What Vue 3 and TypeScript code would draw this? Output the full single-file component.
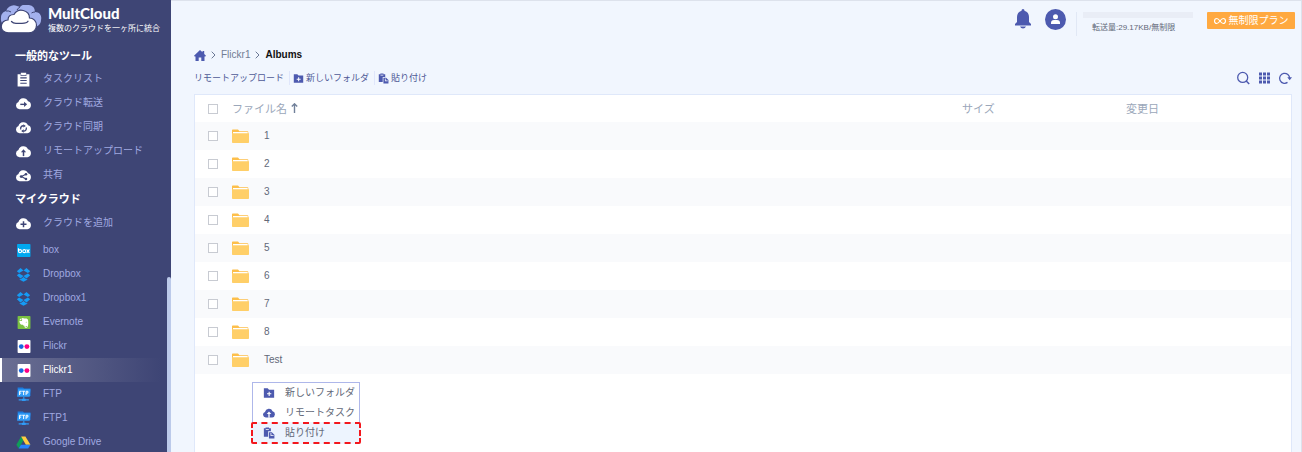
<script setup lang="ts">
import { ref } from 'vue'

interface NavItem {
  label: string
  icon: string
}

const tools: NavItem[] = [
  { label: 'タスクリスト', icon: 'tasks' },
  { label: 'クラウド転送', icon: 'cloud-transfer' },
  { label: 'クラウド同期', icon: 'cloud-sync' },
  { label: 'リモートアップロード', icon: 'cloud-upload' },
  { label: '共有', icon: 'cloud-share' },
]

const clouds: NavItem[] = [
  { label: 'box', icon: 'box' },
  { label: 'Dropbox', icon: 'dropbox' },
  { label: 'Dropbox1', icon: 'dropbox' },
  { label: 'Evernote', icon: 'evernote' },
  { label: 'Flickr', icon: 'flickr' },
  { label: 'Flickr1', icon: 'flickr' },
  { label: 'FTP', icon: 'ftp' },
  { label: 'FTP1', icon: 'ftp' },
  { label: 'Google Drive', icon: 'drive' },
]

const menuItems: NavItem[] = [
  { label: '新しいフォルダ', icon: 'folder-plus' },
  { label: 'リモートタスク', icon: 'cloud-up-blue' },
  { label: '貼り付け', icon: 'paste' },
]

const activeCloud = ref('Flickr1')
const folders = ['1', '2', '3', '4', '5', '6', '7', '8', 'Test']
const selected = ref<string[]>([])
</script>

<template>
  <div class="app">
    <svg class="sprite" aria-hidden="true">
      <symbol id="tasks" viewBox="0 0 14 14">
        <path fill="#fff" d="M1.500 2H4.500V.8h5V2h3v11.500h-11z" />
        <path stroke="#3e4575" d="M4 5.500h6M4 8h6M4 10.500h6" />
        <path stroke="#3e4575" stroke-width=".7" d="M4.500 2.300v1h5v-1" fill="none" />
      </symbol>
      <symbol id="cloud" viewBox="0 0 14 14">
        <path d="M3.300 12.300A3.400 3.400 0 0 1 2.300 5.700 4.700 4.700 0 0 1 11.200 4.900 3.800 3.800 0 0 1 10.700 12.300z" />
      </symbol>
      <symbol id="cloud-transfer" viewBox="0 0 14 14">
        <use href="#cloud" fill="#fff" />
        <path stroke="#3e4575" stroke-width="1.300" d="M4 7.800h4.500" />
        <path fill="#3e4575" d="M7.500 5.300 10.400 7.800 7.500 10.300z" />
      </symbol>
      <symbol id="cloud-sync" viewBox="0 0 14 14">
        <use href="#cloud" fill="#fff" />
        <path stroke="#3e4575" stroke-width="1.200" fill="none" d="M4.500 8.800A2.500 2.500 0 0 1 7.200 5.400M9.500 7A2.500 2.500 0 0 1 6.800 10.400" />
        <path fill="#3e4575" d="M6.800 3.900 9.200 5.500 6.800 7.100zM7.200 8.700v3.200L4.800 10.300z" />
      </symbol>
      <symbol id="cloud-upload" viewBox="0 0 14 14">
        <use href="#cloud" fill="#fff" />
        <path stroke="#3e4575" stroke-width="1.400" d="M7 7v4.300" />
        <path fill="#3e4575" d="M4.600 7.800 7 5l2.400 2.800z" />
      </symbol>
      <symbol id="cloud-share" viewBox="0 0 14 14">
        <use href="#cloud" fill="#fff" />
        <path stroke="#3e4575" fill="none" d="M9.300 5.800 5 8l4.300 2.200" />
        <g fill="#3e4575"><circle cx="9.300" cy="5.800" r="1.200" /><circle cx="4.800" cy="8" r="1.300" /><circle cx="9.300" cy="10.200" r="1.200" /></g>
      </symbol>
      <symbol id="cloud-add" viewBox="0 0 14 14">
        <use href="#cloud" fill="#fff" />
        <path stroke="#3e4575" stroke-width="1.400" d="M4.200 7.800h5.600M7 5v5.600" />
      </symbol>
      <symbol id="cloud-up-blue" viewBox="0 0 14 14">
        <use href="#cloud" fill="#4d5aaf" />
        <path stroke="#fff" stroke-width="1.500" d="M7 7.500v5" />
        <path fill="#fff" d="M4.300 8.300 7 5.300l2.700 3z" />
      </symbol>
      <symbol id="box" viewBox="0 0 14 14">
        <rect x="1" y="1" width="12.500" height="12" rx=".7" fill="#00a8f0" />
        <g stroke="#fff" stroke-width="1" fill="none">
          <path d="M2.300 4.800v3M9.900 6l2.600 3.200M12.500 6 9.900 9.200" />
          <circle cx="3.800" cy="7.600" r="1.400" /><circle cx="7.700" cy="7.600" r="1.400" />
        </g>
      </symbol>
      <symbol id="dropbox" viewBox="0 0 14 14">
        <path fill="#159bf5" d="M4.200 1 7 3.300 2.900 5.700.8 3.900zM9.800 1 7 3.300l4.100 2.400 2.100-1.800zM.8 7.700 2.900 6 7 8.500 4.200 10.800zM13.200 7.700 11.100 6 7 8.500l2.800 2.300zM3.500 11l.8.400L7 9.300l2.700 2.100.8-.4v.8L7 13.700l-3.500-1.900z" />
      </symbol>
      <symbol id="evernote" viewBox="0 0 14 14">
        <rect x="1.500" y="1" width="12" height="12" rx=".7" fill="#7ac142" />
        <path fill="#fff" d="M5.700 2.700c1 0 1.400.5 2.700.5 2.300 0 2.600.3 2.900 2 .4 2.500.2 6.500-1.300 6.700-1.800.2-2.200-.4-2.100-1.900-.6.200-1.300 0-1.400-.8-1.800 0-3-.6-3.400-3.600h2.100q.5 0 .5-.6z" />
        <path fill="#fff" d="M5 2.900v2H3z" />
        <path fill="#7ac142" d="M8.800 6.700q1-1 1.500.3zM9 10.200h1.300v.7H9z" />
      </symbol>
      <symbol id="flickr" viewBox="0 0 14 14">
        <rect x="1.500" y="1" width="12" height="12" rx=".7" fill="#fff" />
        <circle cx="4.900" cy="7.100" r="2.200" fill="#1769e0" /><circle cx="10.200" cy="7.100" r="2.300" fill="#ff0084" />
      </symbol>
      <symbol id="ftp" viewBox="0 0 14 14">
        <path fill="#1c7ce0" d="M1.500 .5h5l1 1h6v7h-12z" />
        <path fill="#319cf7" d="M2 2h11.500L12.800 9H1z" />
        <path stroke="#fff" fill="none" stroke-width=".9" d="M3.300 7.500v-3.500h2M3.300 5.700h1.500M5.800 4h2.600M7.100 4v3.500M9.400 7.500V4h1.700v1.700H9.400" />
        <path stroke="#319cf7" d="M7.300 9v2.500M2.500 12h9.500" /><rect x="5.500" y="11" width="3.500" height="2" fill="#319cf7" />
      </symbol>
      <symbol id="drive" viewBox="0 0 14 14">
        <path fill="#0f9d58" d="M4.800 1.300 7 5 2.500 12.700.3 9z" />
        <path fill="#ffcd40" d="M4.800 1.300h4L13.500 9H9.200z" />
        <path fill="#2684fc" d="M4.600 9h8.900l-2.200 3.700H2.500z" />
      </symbol>
      <symbol id="folder-plus" viewBox="0 0 14 14">
        <path fill="#4d5aaf" d="M1 1.500h4.500L7 3.300h6v9.200H1z" />
        <path stroke="#fff" stroke-width="1.300" d="M4.700 7.900h5M7.200 5.400v5" />
      </symbol>
      <symbol id="paste" viewBox="0 0 14 14">
        <path fill="#4d5aaf" d="M1 1.500h2V.5h4v1h2.200V5H6v6.500H1zM6.900 6h3.400L13.300 9v4.500H6.900z" />
        <path fill="#fff" d="M3.200 2.300h3.600v.9H3.200zM9.700 7v2.700h2.700v.9H8.800V7z" />
      </symbol>
    </svg>

    <aside class="sidebar">
      <div class="brand">
        <svg class="logo" viewBox="0 0 42 29" aria-hidden="true">
          <path fill="#a3b1ee" d="M6 21a7 7 0 0 1-5-8C1 9 3 7 6 6c2-5 7-7 11-5q2 .5 3 1 4-4 9-2 6 1 6 7c5 0 7 4 6 8 0 4-3 7-7 7z" />
          <path fill="none" stroke="#3e4575" stroke-width="1" d="M6 6q3-.5 5 1M20 2q-2 1-3 3M35 7q-2 0-3.500 1" />
          <path fill="#fff" stroke="#3e4575" stroke-width="1.200" d="M8.500 27.800C4 27.800 1.300 25 1.300 21.500c0-4 3-6.500 6.700-6.500 0-3.500 2.500-5.500 6-5.500 2-3.300 5.500-5 9.300-4 4 1 6.200 4 6.200 7.500 4 0 7 3.300 7 7.300 0 4.300-3 7.500-7.500 7.500z" />
          <path fill="none" stroke="#3e4575" stroke-width="1.300" stroke-linecap="round" d="M11.500 16.500q1.500 1.800 4.500 1.800h6q5 0 6-2" />
        </svg>
        <div>
          <div class="brand-name">MultCloud</div>
          <div class="tagline">複数のクラウドを一ヶ所に統合</div>
        </div>
      </div>

      <h2>一般的なツール</h2>
      <nav>
        <a v-for="item in tools" :key="item.label" href="#">
          <svg class="nav-icon" aria-hidden="true"><use :href="'#' + item.icon" /></svg>{{ item.label }}
        </a>
      </nav>
      <h2>マイクラウド</h2>
      <nav>
        <a href="#"><svg class="nav-icon" aria-hidden="true"><use href="#cloud-add" /></svg>クラウドを追加</a>
      </nav>
      <nav class="clouds">
        <a
          v-for="item in clouds"
          :key="item.label"
          href="#"
          :class="{ active: item.label === activeCloud }"
          @click.prevent="activeCloud = item.label"
        >
          <svg class="nav-icon" aria-hidden="true"><use :href="'#' + item.icon" /></svg>{{ item.label }}
        </a>
      </nav>
      <div class="scroll-thumb"></div>
    </aside>

    <main>
      <header>
        <button class="bell" aria-label="通知">
          <svg viewBox="0 0 16 20"><path fill="#4d5aaf" d="M8 0q1.500 0 1.500 1.700C12.500 2.500 14 5 14 8v5l2 2v1.500H0V15l2-2V8c0-3 1.500-5.500 4.500-6.300Q6.500 0 8 0zM5 17.500h6q-.8 2-3 2t-3-2z" /></svg>
        </button>
        <button class="avatar" aria-label="アカウント">
          <svg viewBox="0 0 21 21"><circle cx="10.500" cy="10.500" r="10.500" fill="#4d5aaf" /><circle cx="10.500" cy="7.800" r="2.500" fill="#fff" /><path fill="#fff" d="M6 15v-1q0-3 3-3h3q3 0 3 3v1z" /></svg>
        </button>
        <div class="traffic">
          <div class="meter"></div>
          <div class="traffic-text">転送量:29.17KB/無制限</div>
        </div>
        <button class="plan">
          <svg viewBox="0 0 12 8" aria-hidden="true"><path fill="none" stroke="#fff" stroke-width="1.200" d="M6 4C4.500 2 3.800 1.500 2.800 1.500a2.300 2.500 0 0 0 0 5C3.800 6.500 4.500 6 6 4s2.200-2.500 3.200-2.500a2.300 2.500 0 0 1 0 5C8.200 6.500 7.500 6 6 4z" /></svg>
          無制限プラン
        </button>
      </header>

      <div class="breadcrumb">
        <a href="#" aria-label="ホーム"><svg class="home" viewBox="0 0 12 11"><path fill="#4d5aaf" d="M6 0 8.500 2.300V1h1.700v3L12 5.800 11.300 6.500H10.500V11H7.300V7.500H4.700V11H1.500V6.500H.7L0 5.800z" /></svg></a>
        <svg class="chevron" viewBox="0 0 5 8"><path d="M.7.700 4 4 .7 7.300" /></svg>
        <a href="#">Flickr1</a>
        <svg class="chevron" viewBox="0 0 5 8"><path d="M.7.700 4 4 .7 7.300" /></svg>
        <strong>Albums</strong>
      </div>

      <div class="toolbar">
        <button>リモートアップロード</button>
        <button><svg class="tool-icon" aria-hidden="true"><use href="#folder-plus" /></svg>新しいフォルダ</button>
        <button><svg class="tool-icon" aria-hidden="true"><use href="#paste" /></svg>貼り付け</button>
        <div class="view-tools">
          <button aria-label="検索"><svg viewBox="0 0 14 14"><circle cx="6.700" cy="6.400" r="5" fill="none" stroke="#4d5aaf" stroke-width="1.300" /><path stroke="#4d5aaf" stroke-width="1.500" d="m10.200 10 3 3" /></svg></button>
          <button aria-label="グリッド表示"><svg viewBox="0 0 14 14"><path stroke="#4d5aaf" stroke-width="3" stroke-dasharray="3 1" d="M2 3h11M2 7h11M2 11h11" /></svg></button>
          <button aria-label="更新"><svg viewBox="0 0 14 14"><path fill="none" stroke="#4d5aaf" stroke-width="1.300" d="M9.500 11.400A5 5 0 1 1 11.600 7.500" /><path fill="#4d5aaf" d="M9.300 6.300h4.700l-2.300 3z" /></svg></button>
        </div>
      </div>

      <section class="panel">
        <table>
          <thead>
            <tr>
              <th class="check"><input type="checkbox" aria-label="すべて選択" /></th>
              <th>
                <span class="name-head">ファイル名<svg viewBox="0 0 7 11" aria-hidden="true"><path fill="none" stroke="#71809a" stroke-width="1.400" d="M3.500 10V1M.8 3.500 3.500.8l2.700 2.700" /></svg></span>
              </th>
              <th class="size">サイズ</th>
              <th class="date">変更日</th>
            </tr>
          </thead>
          <tbody>
            <tr v-for="folder in folders" :key="folder">
              <td class="check"><input v-model="selected" type="checkbox" :value="folder" :aria-label="folder" /></td>
              <td>
                <span class="name">
                  <svg viewBox="0 0 17 15" aria-hidden="true"><path fill="#fdbf4b" d="M0 1.200Q0 .5.700.5H6l1.500 1.700h8q.8 0 .8.700V8H0z" /><path fill="#fff" d="M1 3h14.700V6H1z" /><path fill="#ffcf68" d="M0 4.300h17V13.200q0 .8-.8.800H.8Q0 14 0 13.200z" /></svg>
                  {{ folder }}
                </span>
              </td>
              <td></td>
              <td></td>
            </tr>
          </tbody>
        </table>

        <div class="context-menu" role="menu">
          <button v-for="item in menuItems" :key="item.label" role="menuitem" :class="{ marked: item.icon === 'paste' }">
            <svg class="menu-icon" aria-hidden="true"><use :href="'#' + item.icon" /></svg>{{ item.label }}
          </button>
        </div>
      </section>
    </main>
  </div>
</template>

<style>
body {
  margin: 0;
}
</style>

<style scoped>
* {
  box-sizing: border-box;
}
.app {
  display: flex;
  height: 100vh;
  overflow: hidden;
  background: #f1f6fe;
  font: 10px/14px "Liberation Sans", "Noto Sans CJK JP", sans-serif;
  color: #626878;
}
.sprite {
  position: absolute;
  width: 0;
  height: 0;
}
svg {
  display: block;
  flex: none;
}
a {
  color: inherit;
  text-decoration: none;
}
button {
  display: flex;
  align-items: center;
  padding: 0;
  border: 0;
  background: none;
  font: inherit;
  color: inherit;
  white-space: nowrap;
}

.sidebar {
  position: relative;
  flex: none;
  width: 171px;
  background: #3e4575;
  color: #a0a9e0;
  white-space: nowrap;
}
.brand {
  display: flex;
  gap: 6px;
  height: 45px;
  padding-top: 5px;
  color: #fff;
}
.logo {
  width: 42px;
  height: 29px;
}
.brand-name {
  font: 900 15px/16px Lato, sans-serif;
}
.tagline {
  font-size: 8px;
  line-height: 15px;
}
h2 {
  margin: 0;
  padding-left: 15px;
  font-size: 11px;
  line-height: 24px;
  color: #fff;
}
h2:first-of-type {
  padding-top: 1px;
  line-height: 21px;
}
nav a {
  display: flex;
  align-items: center;
  gap: 12px;
  height: 24px;
  padding-left: 16px;
}
.clouds {
  padding-top: 3px;
}
.clouds a.active {
  padding-left: 14px;
  border-left: 2px solid #fff;
  background: linear-gradient(90deg, #6b6f93, #3e4575 94%);
  color: #fff;
}
.nav-icon {
  width: 15px;
  height: 15px;
}
.scroll-thumb {
  position: absolute;
  top: 277px;
  right: 0;
  bottom: 0;
  width: 4px;
  border-radius: 2px 2px 0 0;
  background: #bccaea;
}

main {
  display: flex;
  flex: 1;
  flex-direction: column;
  min-width: 0;
  padding: 0 9px 0 23px;
  border: solid #dde2ec;
  border-width: 1px 1px 0 0;
}
header {
  display: flex;
  align-items: flex-start;
  justify-content: flex-end;
  height: 44px;
  margin-right: -3px;
  padding-top: 8px;
}
.bell svg {
  width: 16px;
  height: 20px;
}
.avatar {
  margin: 0 10px 0 14px;
}
.avatar svg {
  width: 21px;
  height: 21px;
}
.traffic {
  width: 117px;
  margin-top: 3px;
  padding-left: 6px;
  border-left: 1px solid #e1e8f5;
}
.meter {
  height: 6px;
  background: #e9edf6;
}
.traffic-text {
  padding: 1px 0 0 9px;
  font-size: 8px;
  line-height: 17px;
}
.plan {
  justify-content: center;
  gap: 3px;
  width: 88px;
  height: 17px;
  margin: 3px 0 0 14px;
  border-radius: 1px;
  background: #ffa940;
  color: #fff;
}
.plan svg {
  width: 12px;
  height: 8px;
}

.breadcrumb {
  display: flex;
  align-items: center;
  gap: 5px;
  height: 20px;
  color: #717d94;
}
.breadcrumb strong {
  color: #111;
}
.home {
  width: 12px;
  height: 11px;
}
.chevron {
  width: 5px;
  height: 8px;
  fill: none;
  stroke: #6b7895;
}
.toolbar {
  display: flex;
  align-items: center;
  height: 29px;
  padding-bottom: 3px;
  font-size: 9px;
  color: #4f5a96;
}
.toolbar > button + button {
  margin-left: 5px;
  padding-left: 3px;
  border-left: 1px solid #dfe6fb;
}
.tool-icon {
  width: 11px;
  height: 11px;
  margin-right: 2px;
}
.view-tools {
  display: flex;
  gap: 7px;
  margin-left: auto;
}
.view-tools svg {
  width: 14px;
  height: 14px;
}

.panel {
  position: relative;
  flex: 1;
  border: 1px solid #dfe8fa;
  border-bottom: 0;
  background: #fff;
}
table {
  width: 100%;
  border-collapse: collapse;
  table-layout: fixed;
}
th,
td {
  height: 28px;
  padding: 0;
  text-align: left;
}
thead th {
  height: 27px;
  font-size: 11px;
  font-weight: 400;
  color: #9ba7ba;
}
.check {
  width: 37px;
  padding-left: 13px;
}
.size {
  width: 164px;
}
.date {
  width: 165px;
}
tbody tr:nth-child(odd) {
  background: #f9fafc;
}
input {
  display: block;
  appearance: none;
  width: 10px;
  height: 10px;
  margin: 0;
  border: 1px solid #c8cbd2;
  background: #fff;
}
input:checked {
  background: #4d5aaf;
}
.name,
.name-head {
  display: flex;
  align-items: center;
}
.name {
  gap: 15px;
}
.name-head {
  gap: 4px;
}
.name svg {
  width: 17px;
  height: 15px;
}
.name-head svg {
  width: 7px;
  height: 11px;
}

.context-menu {
  position: absolute;
  top: 287px;
  left: 57px;
  width: 108px;
  border: 1px solid #aeb7ea;
  background: #fff;
}
.context-menu button {
  gap: 10px;
  width: 100%;
  height: 20px;
  padding-left: 10px;
}
.menu-icon {
  width: 12px;
  height: 12px;
}
.context-menu .marked {
  width: calc(100% + 4px);
  height: 22px;
  margin: -1px -2px -2px;
  border: 2px dashed #f3171d;
  border-radius: 2px;
  background: #edf4fe;
}
</style>
